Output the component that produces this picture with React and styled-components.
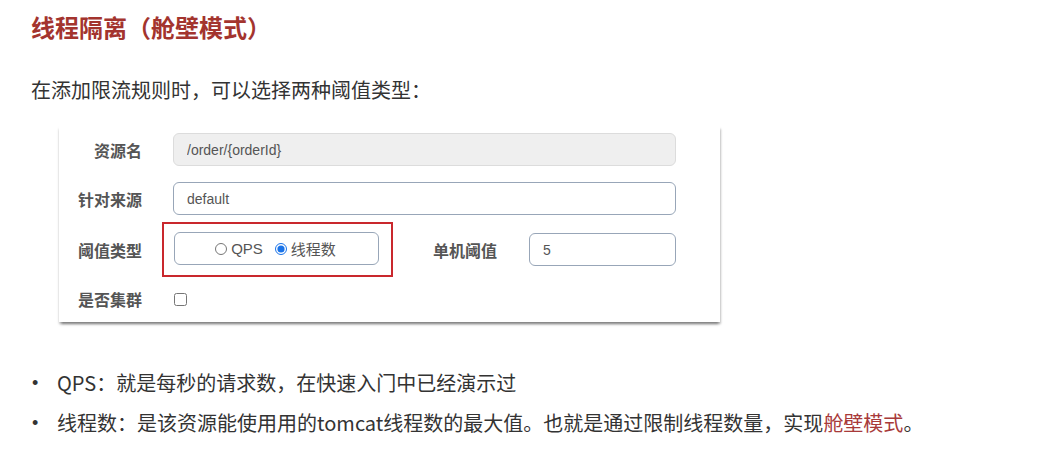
import styled, { createGlobalStyle } from "styled-components";

const GlobalStyle = createGlobalStyle`
  body {
    margin: 0;
    background: #fff;
    font-family: "Noto Sans CJK SC", "Noto Sans", sans-serif;
    color: #333;
  }
`;

const Page = styled.div`
  width: 1040px;
  height: 467px;
  padding: 11px 0 0 31px;
  box-sizing: border-box;
  overflow: hidden;
`;

const Title = styled.h2`
  margin: 0;
  font-size: 24px;
  line-height: 32px;
  font-weight: 700;
  color: #a3342e;
`;

const Intro = styled.p`
  margin: 33px 0 0;
  font-size: 20px;
  line-height: 28px;
  color: #333;
`;

const Card = styled.div`
  width: 661px;
  margin: 21px 0 0 28px;
  padding: 8px 0 0 18px;
  box-sizing: border-box;
  height: 197px;
  background: #fff;
  box-shadow: 0 3px 3px -1px rgba(0, 0, 0, 0.35), -1px 3px 2px -1px rgba(0, 0, 0, 0.1),
    2px 3px 2px -1px rgba(0, 0, 0, 0.18);
  display: flex;
  flex-direction: column;
`;

const Row = styled.div`
  display: flex;
  align-items: center;
  height: ${({ h }) => h}px;
  margin-top: ${({ mt }) => mt}px;
`;

const Label = styled.label`
  width: ${({ w }) => w || 65}px;
  flex-shrink: 0;
  text-align: right;
  font-size: 16px;
  font-weight: 700;
  color: #555;
  margin-right: ${({ gap }) => gap}px;
`;

const TextInput = styled.input`
  width: ${({ w }) => w}px;
  height: 33px;
  box-sizing: border-box;
  padding: 0 13px;
  border: 1px solid ${({ disabled }) => (disabled ? "#dcdcdc" : "#98a6b8")};
  border-radius: 6px;
  background: ${({ disabled }) => (disabled ? "#efefef" : "#fff")};
  font-family: "Liberation Sans", Arial, sans-serif;
  font-size: 14px;
  color: #555;
  outline: none;
  &:disabled {
    color: #555;
  }
`;

const Highlight = styled.div`
  width: 231px;
  height: 55px;
  box-sizing: border-box;
  margin-left: -11px;
  margin-right: 40px;
  padding: 8px 12px 0 10px;
  border: 2px solid #c9282d;
`;

const RadioBox = styled.div`
  width: 205px;
  height: 33px;
  box-sizing: border-box;
  border: 1px solid #98a6b8;
  border-radius: 6px;
  display: flex;
  align-items: center;
  justify-content: center;
  padding-right: 2px;
  gap: 12px;
`;

const RadioOption = styled.label`
  display: flex;
  align-items: center;
  gap: 4px;
  font-size: 15px;
  color: #555;
  font-family: "Liberation Sans", "Noto Sans CJK SC", sans-serif;
`;

const Radio = styled.input.attrs({ type: "radio" })`
  margin: 0;
  width: 12px;
  height: 12px;
  accent-color: #1a73e8;
`;

const Checkbox = styled.input.attrs({ type: "checkbox" })`
  margin: 0 0 0 1px;
  width: 13px;
  height: 13px;
`;

const BulletList = styled.ul`
  list-style: none;
  margin: 41px 0 0;
  padding: 0;
`;

const Item = styled.li`
  display: flex;
  font-size: 20px;
  line-height: 40px;
  color: #333;
`;

const Dot = styled.span`
  width: 26px;
  flex-shrink: 0;
  padding-left: 1px;
  box-sizing: border-box;
  font-family: "Liberation Sans", Arial, sans-serif;
  font-size: 18px;
`;

const Accent = styled.span`
  color: #a83a3a;
`;

export default function App() {
  return (
    <Page>
      <GlobalStyle />
      <Title>线程隔离（舱壁模式）</Title>
      <Intro>在添加限流规则时，可以选择两种阈值类型：</Intro>
      <Card>
        <Row h={33} mt={0}>
          <Label gap={31}>资源名</Label>
          <TextInput w={503} disabled value="/order/{orderId}" readOnly />
        </Row>
        <Row h={33} mt={16}>
          <Label gap={31}>针对来源</Label>
          <TextInput w={503} value="default" readOnly />
        </Row>
        <Row h={55} mt={7}>
          <Label gap={31}>阈值类型</Label>
          <Highlight>
            <RadioBox>
              <RadioOption>
                <Radio name="grade" />
                QPS
              </RadioOption>
              <RadioOption>
                <Radio name="grade" defaultChecked />
                线程数
              </RadioOption>
            </RadioBox>
          </Highlight>
          <Label gap={32} w={64}>单机阈值</Label>
          <TextInput w={147} value="5" readOnly />
        </Row>
        <Row h={44} mt={0}>
          <Label gap={31}>是否集群</Label>
          <Checkbox />
        </Row>
      </Card>
      <BulletList>
        <Item>
          <Dot>•</Dot>
          <span>QPS：就是每秒的请求数，在快速入门中已经演示过</span>
        </Item>
        <Item>
          <Dot>•</Dot>
          <span>
            线程数：是该资源能使用用的tomcat线程数的最大值。也就是通过限制线程数量，实现
            <Accent>舱壁模式</Accent>。
          </span>
        </Item>
      </BulletList>
    </Page>
  );
}
